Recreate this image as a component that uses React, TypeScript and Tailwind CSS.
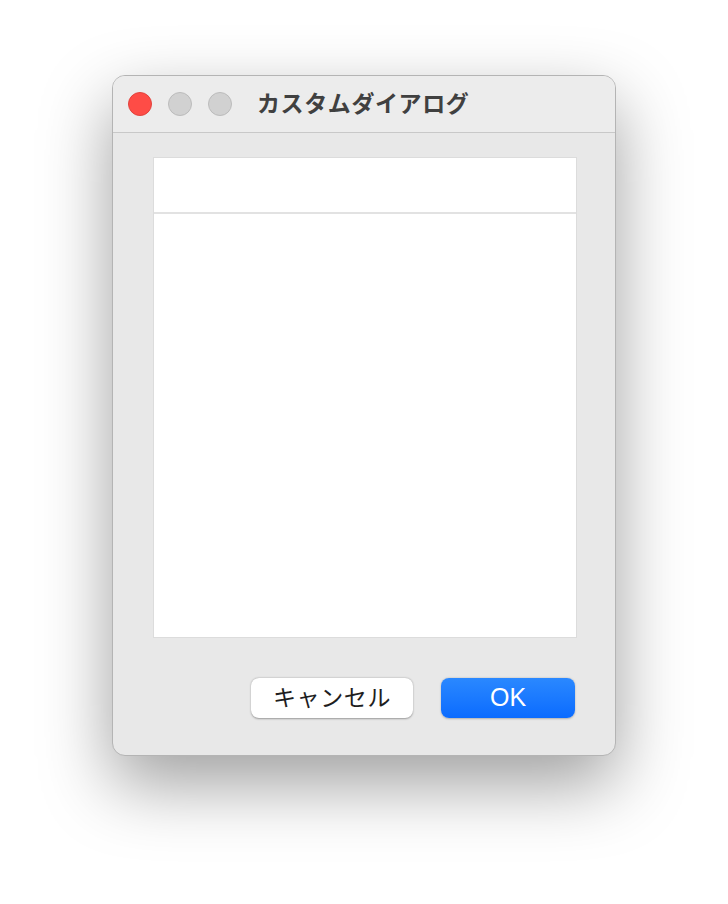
import React from "react";

export default function App() {
  return (
    <div
      className="w-[728px] h-[904px] bg-white pt-[75px] pl-[112px]"
      style={{ fontFamily: '"Noto Sans CJK JP", "Noto Sans", sans-serif' }}
    >
      <div className="w-[504px] h-[681px] rounded-[13px] bg-[#e8e8e8] border border-[#b4b4b4] shadow-[0_28px_70px_rgba(0,0,0,0.38)] flex flex-col overflow-hidden">
        <div className="h-[57px] shrink-0 bg-[#ececec] border-b border-[#c8c8c8] flex items-center pl-[15px]">
          <div className="flex items-center gap-[16px]">
            <div className="w-[24px] h-[24px] rounded-full bg-[#fe4c46] border border-[#e2433d]" />
            <div className="w-[24px] h-[24px] rounded-full bg-[#d1d1d1] border border-[#bcbcbc]" />
            <div className="w-[24px] h-[24px] rounded-full bg-[#d1d1d1] border border-[#bcbcbc]" />
          </div>
          <div className="ml-[25px] -mt-[3px] text-[23px] font-bold text-[#404040] leading-none tracking-[0.6px]">
            カスタムダイアログ
          </div>
        </div>
        <div className="flex-1 flex flex-col pt-[24px] pl-[40px] pr-[38px]">
          <div className="h-[481px] bg-white border border-[#dcdcdc] flex flex-col">
            <div className="h-[54px] shrink-0" />
            <div className="h-[2px] bg-[#e2e2e2] shrink-0" />
            <div className="flex-1" />
          </div>
          <div className="flex justify-end gap-[28px] mt-[40px] pr-[2px]">
            <button className="w-[162px] h-[40px] rounded-[8px] bg-white shadow-[0_0.5px_2px_rgba(0,0,0,0.35)] text-[23px] font-normal text-[#1e1e1e] leading-none flex items-center justify-center pb-[4px] tracking-[0.6px]">
              キャンセル
            </button>
            <button
              className="w-[134px] h-[40px] rounded-[8px] bg-gradient-to-b from-[#2a88ff] to-[#0a6bff] shadow-[0_0.5px_2px_rgba(0,0,0,0.25)] text-[25px] text-white leading-none flex items-center justify-center pb-[2px]"
              style={{ fontFamily: '"Liberation Sans", Arial, sans-serif' }}
            >
              OK
            </button>
          </div>
        </div>
      </div>
    </div>
  );
}
